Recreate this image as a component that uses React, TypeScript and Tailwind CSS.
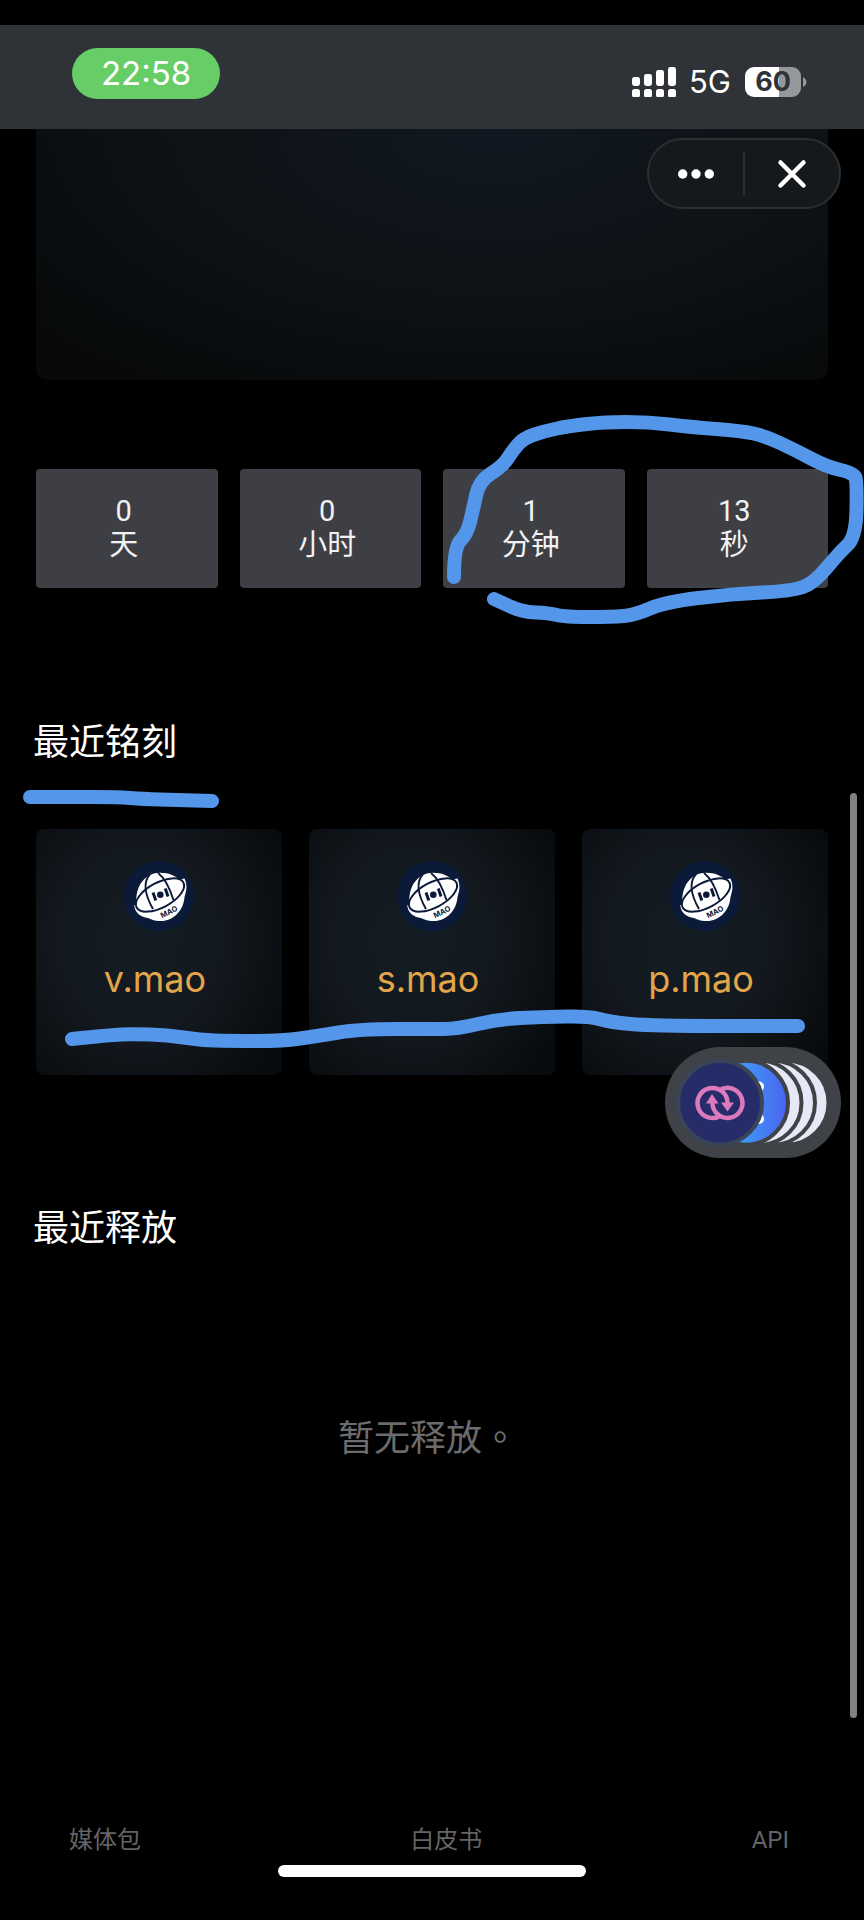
type Point = [number, number];

const countdown = [
  { value: "0", unit: "天" },
  { value: "0", unit: "小时" },
  { value: "1", unit: "分钟" },
  { value: "13", unit: "秒" },
];

const inscriptions = ["v.mao", "s.mao", "p.mao"];

const circleMark: Point[] = [
  [454, 577], [454, 547], [467, 534], [473, 510], [479, 481], [503, 466], [513, 450], [524, 438],
  [545, 431], [569, 426], [605, 422], [649, 422], [690, 427], [742, 431], [765, 436], [795, 450],
  [827, 467], [854, 473], [857, 482], [856, 537], [839, 553], [814, 583], [792, 591], [732, 594],
  [665, 602], [635, 615], [612, 617], [565, 617], [549, 613], [522, 612], [494, 599],
];
const titleMark: Point[] = [[30, 797], [72, 797], [117, 797], [143, 799], [177, 800], [212, 801]];
const rowMark: Point[] = [
  [72, 1039], [110, 1035], [133, 1034], [167, 1035], [200, 1040], [230, 1041], [283, 1041],
  [317, 1036], [360, 1029], [432, 1029], [457, 1029], [499, 1019], [542, 1017], [589, 1016],
  [609, 1022], [652, 1026], [798, 1026],
];

/* Joins the midpoints of the points with quadratic curves. */
function smooth(points: Point[]): string {
  let d = `M${points[0][0]} ${points[0][1]}`;
  for (let i = 1; i < points.length - 1; i++) {
    const [x, y] = points[i];
    const [nx, ny] = points[i + 1];
    d += ` Q${x} ${y} ${(x + nx) / 2} ${(y + ny) / 2}`;
  }
  const last = points[points.length - 1];
  return `${d} L${last[0]} ${last[1]}`;
}

function Signal() {
  const tops = [10, 7, 3, 0];
  return (
    <svg width="44" height="30" viewBox="0 0 44 30" fill="white" aria-hidden="true">
      {tops.map((top, i) => (
        <g key={top}>
          <rect x={i * 12} y={top} width="8" height={19 - top} rx="2.4" />
          <rect x={i * 12} y="22" width="8" height="8.500" rx="2.6" />
        </g>
      ))}
    </svg>
  );
}

function StatusBar() {
  return (
    <header className="flex h-26 items-start justify-between bg-[#2f3237] pl-18 pr-[57px] font-['Inter',sans-serif] text-white">
      <div className="mt-[23px] flex h-[51px] w-[148px] items-center justify-center rounded-full bg-[#67ce67] text-[33px]">
        22:58
      </div>
      <div className="mt-[42px] flex h-[30px] items-center">
        <Signal />
        <span className="ml-[13px] text-[31px] leading-[30px]">5G</span>
        <div className="ml-[14px] flex h-[30px] w-14 items-center justify-center rounded-[9px] bg-linear-to-r from-white from-60% to-[#96989c] to-60% text-[27px] font-bold leading-[30px] text-[#2f3237]">
          60
        </div>
        <svg className="ml-0.5" width="4" height="10" viewBox="0 0 4 10" fill="#96989c" aria-hidden="true">
          <path d="M0 0C2 1 3.500 3 3.500 5S2 9 0 10Z" />
        </svg>
      </div>
    </header>
  );
}

function Capsule() {
  return (
    <div className="absolute right-[23px] top-[138px] flex h-[71px] w-[194px] items-center rounded-full border-2 border-[#2c2f32] bg-[#16191b]">
      <button type="button" aria-label="更多" className="flex h-full flex-1 items-center justify-center">
        <svg width="36" height="10" viewBox="0 0 36 10" fill="white">
          <circle cx="4.700" cy="5" r="4.700" />
          <circle cx="18" cy="5" r="4.700" />
          <circle cx="31.300" cy="5" r="4.700" />
        </svg>
      </button>
      <div className="h-11 w-0.5 bg-[#2c2f32]" />
      <button type="button" aria-label="关闭" className="flex h-full flex-1 items-center justify-center">
        <svg width="30" height="30" viewBox="0 0 30 30" fill="none" stroke="white" strokeWidth="4.500" strokeLinecap="round">
          <path d="M3.500 3.500L26.500 26.500M26.500 3.500L3.500 26.500" />
        </svg>
      </button>
    </div>
  );
}

function MaoLogo() {
  return (
    <svg className="size-[70px]" viewBox="0 0 70 70" aria-hidden="true">
      <circle cx="35" cy="35" r="35" fill="#0b1a38" />
      <path
        d="M12.500 44C10.500 24 22 11.700 36 11.700C45 11.700 51 14.500 55 18.500L60.500 17.500C64 25 62 31 60.500 36C59.500 50 49 60 37 60C30 60 27 58.500 24 57C17 56 10.500 52 10.300 44Z"
        fill="white"
      />
      <g fill="none" stroke="#0b1a38">
        <ellipse cx="36" cy="34" rx="26.500" ry="12.500" strokeWidth="2" transform="rotate(-28 36 34)" />
        <path d="M26 13C19 21 21 34 29 48" strokeWidth="1.900" />
        <path d="M34 12C42 18 46 28 49.500 39" strokeWidth="1.900" />
        <path d="M29 31.500L31.800 39.500M41.300 27.500L44 35.500" strokeWidth="3" />
      </g>
      <circle cx="36.300" cy="33.800" r="3.300" fill="#0b1a38" />
      <text
        x="45"
        y="53.500"
        fill="#0b1a38"
        fontSize="7.500"
        fontWeight="700"
        textAnchor="middle"
        transform="rotate(-26 45 51)"
        className="font-['Inter',sans-serif]"
      >
        MAO
      </text>
    </svg>
  );
}

function FloatingApps() {
  return (
    <button
      type="button"
      aria-label="浮窗"
      className="absolute right-[23px] top-[1047px] h-[111px] w-44 rounded-full bg-[#3f4348]"
    >
      <svg width="176" height="111" viewBox="0 0 176 111">
        <defs>
          <linearGradient id="blue" x1="0" y1="0" x2="1" y2="0">
            <stop offset="0.5" stopColor="#4094f6" />
            <stop offset="1" stopColor="#4b62ee" />
          </linearGradient>
        </defs>
        <g stroke="#3f4348" strokeWidth="4">
          <circle cx="121.500" cy="55.700" r="42" fill="#e6e8f5" />
          <circle cx="108" cy="55.700" r="42" fill="#e6e8f5" />
          <circle cx="94.500" cy="55.700" r="42" fill="#e6e8f5" />
          <circle cx="81" cy="55.700" r="42" fill="url(#blue)" />
        </g>
        <circle cx="94" cy="39.500" r="5" fill="white" />
        <circle cx="94" cy="72" r="5" fill="white" />
        <circle cx="55" cy="55.700" r="42" fill="#262c68" stroke="#3a4557" strokeWidth="4" />
        <g fill="none" stroke="#dd79bd" strokeWidth="4.500">
          <path d="M56 68.300A15 15 0 1 1 62.500 56" />
          <path d="M54.500 43.200A15 15 0 1 1 47.500 55" />
        </g>
        <path d="M47 47L53.500 56.500H41Z M62.500 64.500L56 55.500H69Z" fill="#dd79bd" />
      </svg>
    </button>
  );
}

export default function App() {
  return (
    <div className="relative flex min-h-screen flex-col overflow-hidden bg-black pt-[25px] font-['Roboto','Noto_Sans_CJK_SC',sans-serif] text-white">
      <StatusBar />
      <main className="flex flex-1 flex-col px-9">
        <section className="h-[251px] rounded-b-xl bg-[radial-gradient(ellipse_75%_120%_at_58%_0%,#111821_0%,#0e1216_55%,#07090a_100%)]" />

        <section className="mt-[89px] grid grid-cols-4 gap-[22px]">
          {countdown.map((item) => (
            <div key={item.unit} className="flex h-[119px] flex-col items-center rounded bg-[#3e3f44] pt-[25px] pr-1.5 text-[29px] leading-[34px] text-[#f2f2f4]">
              <span>{item.value}</span>
              <span>{item.unit}</span>
            </div>
          ))}
        </section>

        <section className="mt-[131px]">
          <h2 className="-ml-[3px] text-4xl leading-12 font-normal">最近铭刻</h2>
          <div className="mt-[62px] grid grid-cols-3 gap-[27px]">
            {inscriptions.map((name) => (
              <a
                key={name}
                href="#"
                className="flex aspect-square flex-col items-center rounded-lg bg-[radial-gradient(ellipse_68%_78%_at_42%_45%,#141d24_0%,#12181e_50%,#080b0d_100%)] pt-8"
              >
                <MaoLogo />
                <span className="mt-6 pr-2 font-['Inter',sans-serif] text-4xl leading-12 text-[#e2a54a]">{name}</span>
              </a>
            ))}
          </div>
        </section>

        <section className="mt-[130px]">
          <h2 className="-ml-[3px] text-4xl leading-12 font-normal">最近释放</h2>
          <p className="mt-[158px] pr-2 text-center text-4xl leading-12 text-[#6c6c6e]">
            暂无释放<span className="font-['Noto_Sans_CJK_TC',sans-serif]">。</span>
          </p>
        </section>
      </main>

      <footer>
        <nav className="flex justify-between pl-[69px] pr-[75px] text-2xl leading-8 text-[#646467]">
          <a href="#">媒体包</a>
          <a href="#">白皮书</a>
          <a href="#">API</a>
        </nav>
        <div className="mx-auto mt-[9px] mb-[43px] h-3 w-[308px] rounded-full bg-white" />
      </footer>

      <div className="absolute right-[7px] top-[793px] h-[925px] w-[7px] rounded-full bg-[#828282]" />
      <Capsule />
      <svg
        className="pointer-events-none absolute inset-x-0 top-0 w-full"
        viewBox="0 0 864 1920"
        fill="none"
        stroke="#5496ea"
        strokeWidth="14"
        strokeLinecap="round"
        strokeLinejoin="round"
        aria-hidden="true"
      >
        <path d={smooth(circleMark)} />
        <path d={smooth(titleMark)} />
        <path d={smooth(rowMark)} />
      </svg>
      <FloatingApps />
    </div>
  );
}
